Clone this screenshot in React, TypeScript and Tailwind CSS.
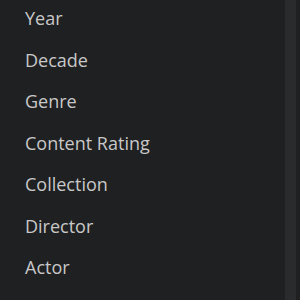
import React from 'react';

const items = ['Year', 'Decade', 'Genre', 'Content Rating', 'Collection', 'Director', 'Actor'];

const App: React.FC = () => {
    return (
        <div className="flex h-[300px] w-[300px] overflow-hidden bg-[#1f2022]" style={{ fontFamily: '"Open Sans", sans-serif' }}>
            <ul className="-mt-[2px] flex flex-1 flex-col">
                {items.map((item) => (
                    <li key={item} className="flex h-[41.5px] shrink-0 items-center pl-[25px] text-[18px] font-medium text-[#c8c8c8]">
                        {item}
                    </li>
                ))}
            </ul>
            <div className="mr-[4px] w-[11px] bg-[#2a2b2c]" />
        </div>
    );
};

export default App;
